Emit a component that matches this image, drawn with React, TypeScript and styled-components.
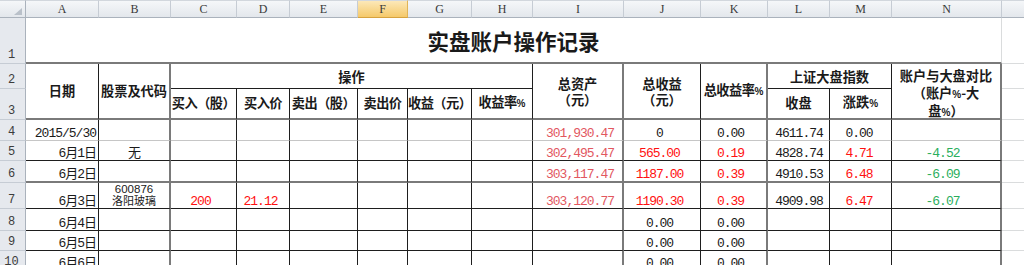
import React from 'react';
import styled, { createGlobalStyle } from 'styled-components';

const GlobalStyle = createGlobalStyle`
  html, body {
    margin: 0;
    padding: 0;
    background: #fff;
    overflow: hidden;
  }
`;

type Edge = 'grid' | 'soft' | 'thin' | 'thick';
type Tone = 'ink' | 'red' | 'rose' | 'green';
type Align = 'left' | 'center' | 'right';

const EDGE: Record<Edge, string> = {
  grid: '1px solid #dadcdd',
  soft: '1px solid #c6c6c6',
  thin: '1px solid #1e1e1e',
  thick: '2px solid #7a7a7a',
};

const TONE: Record<Tone, string> = {
  ink: '#1a1a1a',
  red: '#ff1010',
  rose: '#e2575f',
  green: '#2aae5c',
};

const LETTERS = ['A', 'B', 'C', 'D', 'E', 'F', 'G', 'H', 'I', 'J', 'K', 'L', 'M', 'N', ''];
const WIDTHS = [73, 72, 66, 53, 68, 50, 64, 61, 91, 77, 67, 62, 62, 110, 140];
const HEIGHTS = [46, 25, 31, 21, 20, 22, 26, 22, 20, 20];

const HEAD_BG = 'linear-gradient(#f5f7f9, #e3e7ec)';

const Sheet = styled.div`
  display: grid;
  grid-template-columns: 26px ${WIDTHS.map((w) => `${w}px`).join(' ')};
  grid-template-rows: 18px ${HEIGHTS.map((h) => `${h}px`).join(' ')};
  width: 1024px;
  height: 265px;
  overflow: hidden;
  font-family: "Liberation Mono", "Noto Sans CJK SC", monospace;
`;

const Corner = styled.div`
  box-sizing: border-box;
  background: ${HEAD_BG};
  border-top: 1px solid #d2d7dd;
  border-right: 1px solid #aab2bc;
  border-bottom: 1px solid #aab2bc;
  display: flex;
  align-items: flex-end;
  justify-content: flex-end;
  padding: 0 3px 2px 0;
`;

const ColHead = styled.div<{ $active?: boolean }>`
  box-sizing: border-box;
  background: ${(p) => (p.$active ? 'linear-gradient(#fce8b8, #f5c96a)' : HEAD_BG)};
  border-top: 1px solid #d2d7dd;
  border-right: 1px solid ${(p) => (p.$active ? '#e0b457' : '#c6ccd4')};
  border-bottom: 1px solid ${(p) => (p.$active ? '#d6a23f' : '#aab2bc')};
  display: flex;
  align-items: center;
  justify-content: center;
  font: 12px "Liberation Serif", serif;
  color: #3a3a3a;
`;

const RowHead = styled.div`
  box-sizing: border-box;
  background: #e6e9ee;
  border-right: 1px solid #aab2bc;
  border-bottom: 1px solid #c6ccd4;
  display: flex;
  align-items: flex-end;
  justify-content: center;
  padding: 0 2px 1px 0;
  font: 12px/13px "Liberation Mono", monospace;
  color: #3c3c3c;
`;

const Cell = styled.div<{
  $cols?: number;
  $rows?: number;
  $r?: Edge;
  $b?: Edge;
  $h?: Align;
  $v?: 'center' | 'bottom';
  $pr?: number;
  $tone?: Tone;
  $small?: boolean;
}>`
  grid-column: span ${(p) => p.$cols ?? 1};
  grid-row: span ${(p) => p.$rows ?? 1};
  box-sizing: border-box;
  min-width: 0;
  border-right: ${(p) => EDGE[p.$r ?? 'grid']};
  border-bottom: ${(p) => EDGE[p.$b ?? 'grid']};
  display: flex;
  flex-direction: column;
  justify-content: ${(p) => (p.$v === 'center' ? 'center' : 'flex-end')};
  text-align: ${(p) => p.$h ?? 'left'};
  padding: 0 ${(p) => p.$pr ?? 1}px 0 1px;
  overflow: hidden;
  white-space: nowrap;
  color: ${(p) => TONE[p.$tone ?? 'ink']};
  font-size: ${(p) => (p.$small ? '11px' : '13px')};
  line-height: ${(p) => (p.$small ? '13px' : '12px')};
  letter-spacing: ${(p) => (p.$small ? '0' : '-1px')};
`;

const Head = styled(Cell)<{ $tight?: boolean; $drop?: number }>`
  font-family: "Noto Sans CJK SC", sans-serif;
  font-weight: 700;
  font-size: 13.2px;
  line-height: 16.5px;
  letter-spacing: ${(p) => (p.$tight ? '-0.5px' : '0')};
  text-align: center;
  padding: ${(p) => p.$drop ?? 0}px 0 0 0;
`;

const Title = styled(Cell)`
  font-family: "Noto Sans CJK SC", sans-serif;
  font-weight: 700;
  font-size: 21.5px;
  line-height: 26px;
  letter-spacing: 0;
  text-align: center;
  padding-top: 2px;
`;

const Line = styled.div``;

const Pct = styled.span`
  font-family: "Liberation Sans", sans-serif;
  font-size: 10px;
  letter-spacing: 0;
`;

const Code = styled.div`
  font-family: "Liberation Sans", sans-serif;
  font-size: 11.5px;
`;

type Entry = string | { text: string | string[]; tone?: Tone; small?: boolean };

const red = (text: string): Entry => ({ text, tone: 'red' });

const COLUMNS: { h: Align; pr: number; r: Edge; tone: Tone }[] = [
  { h: 'right', pr: 2, r: 'thin', tone: 'ink' },
  { h: 'center', pr: 1, r: 'thick', tone: 'ink' },
  { h: 'center', pr: 7, r: 'thin', tone: 'red' },
  { h: 'center', pr: 6, r: 'thin', tone: 'red' },
  { h: 'center', pr: 1, r: 'thin', tone: 'ink' },
  { h: 'center', pr: 1, r: 'thin', tone: 'ink' },
  { h: 'center', pr: 1, r: 'thin', tone: 'ink' },
  { h: 'center', pr: 1, r: 'thin', tone: 'ink' },
  { h: 'right', pr: 8, r: 'thick', tone: 'rose' },
  { h: 'center', pr: 6, r: 'thin', tone: 'ink' },
  { h: 'center', pr: 7, r: 'thick', tone: 'ink' },
  { h: 'center', pr: 0, r: 'thin', tone: 'ink' },
  { h: 'center', pr: 4, r: 'thin', tone: 'ink' },
  { h: 'center', pr: 8, r: 'thick', tone: 'green' },
];

const ROWS: { n: number; b: Edge; cells: Entry[] }[] = [
  { n: 4, b: 'soft', cells: ['2015/5/30', '', '', '', '', '', '', '', '301,930.47', '0', '0.00', '4611.74', '0.00', ''] },
  { n: 5, b: 'thin', cells: ['6月1日', '无', '', '', '', '', '', '', '302,495.47', red('565.00'), red('0.19'), '4828.74', red('4.71'), '-4.52'] },
  { n: 6, b: 'thick', cells: ['6月2日', '', '', '', '', '', '', '', '303,117.47', red('1187.00'), red('0.39'), '4910.53', red('6.48'), '-6.09'] },
  {
    n: 7,
    b: 'thin',
    cells: ['6月3日', { text: ['600876', '洛阳玻璃'], small: true }, '200', '21.12', '', '', '', '', '303,120.77', red('1190.30'), red('0.39'), '4909.98', red('6.47'), '-6.07'],
  },
  { n: 8, b: 'thin', cells: ['6月4日', '', '', '', '', '', '', '', '', '0.00', '0.00', '', '', ''] },
  { n: 9, b: 'thin', cells: ['6月5日', '', '', '', '', '', '', '', '', '0.00', '0.00', '', '', ''] },
  { n: 10, b: 'thin', cells: ['6月6日', '', '', '', '', '', '', '', '', '0.00', '0.00', '', '', ''] },
];

const OPERATIONS = ['买入（股）', '买入价', '卖出（股）', '卖出价', '收益（元）', '收益率'];

function DataCell({ entry, col, edge }: { entry: Entry; col: number; edge: Edge }) {
  const c = COLUMNS[col];
  const item = typeof entry === 'string' ? { text: entry } : entry;
  if (Array.isArray(item.text)) {
    return (
      <Cell $r={c.r} $b={edge} $h="center" $v="center" $small={item.small}>
        <Code>{item.text[0]}</Code>
        <Line>{item.text[1]}</Line>
      </Cell>
    );
  }
  return (
    <Cell $r={c.r} $b={edge} $h={c.h} $pr={c.pr} $tone={item.tone ?? c.tone}>
      {item.text}
    </Cell>
  );
}

export default function App() {
  return (
    <>
      <GlobalStyle />
      <Sheet>
        <Corner>
          <svg width="8" height="7" viewBox="0 0 8 7">
            <polygon points="8,0 8,7 0,7" fill="#b9c0c9" />
          </svg>
        </Corner>
        {LETTERS.map((l, i) => (
          <ColHead key={i} $active={l === 'F'}>{l}</ColHead>
        ))}

        <RowHead>1</RowHead>
        <Title $cols={14} $r="grid" $b="thick" $v="center">实盘账户操作记录</Title>
        <Cell />

        <RowHead>2</RowHead>
        <Head $rows={2} $r="thin" $b="thick" $v="center">日期</Head>
        <Head $rows={2} $r="thick" $b="thick" $v="center">股票及代码</Head>
        <Head $cols={6} $r="thin" $b="thin" $v="center" $drop={2}>操作</Head>
        <Head $rows={2} $r="thick" $b="thick" $v="center" $drop={2}>
          <Line>总资产</Line>
          <Line>（元）</Line>
        </Head>
        <Head $rows={2} $r="thin" $b="thick" $v="center" $drop={2}>
          <Line>总收益</Line>
          <Line>（元）</Line>
        </Head>
        <Head $rows={2} $r="thick" $b="thick" $v="center" $tight>
          <Line>
            总收益率<Pct>%</Pct>
          </Line>
        </Head>
        <Head $cols={2} $r="thin" $b="thin" $v="center" $drop={2}>上证大盘指数</Head>
        <Head $rows={2} $r="thick" $b="thick" $v="center" $drop={8}>
          <Line>账户与大盘对比</Line>
          <Line>
            （账户<Pct>%</Pct>-大
          </Line>
          <Line>
            盘<Pct>%</Pct>）
          </Line>
        </Head>
        <Cell />

        <RowHead>3</RowHead>
        {OPERATIONS.map((op, i) => (
          <Head key={op} $r="thin" $b="thick" $v="center" $tight>
            <Line>
              {op}
              {i === OPERATIONS.length - 1 && <Pct>%</Pct>}
            </Line>
          </Head>
        ))}
        <Head $r="thin" $b="thick" $v="center">收盘</Head>
        <Head $r="thin" $b="thick" $v="center">
          <Line>
            涨跌<Pct>%</Pct>
          </Line>
        </Head>
        <Cell />

        {ROWS.map((row) => (
          <React.Fragment key={row.n}>
            <RowHead>{row.n}</RowHead>
            {row.cells.map((entry, i) => (
              <DataCell key={i} entry={entry} col={i} edge={row.b} />
            ))}
            <Cell />
          </React.Fragment>
        ))}
      </Sheet>
    </>
  );
}
